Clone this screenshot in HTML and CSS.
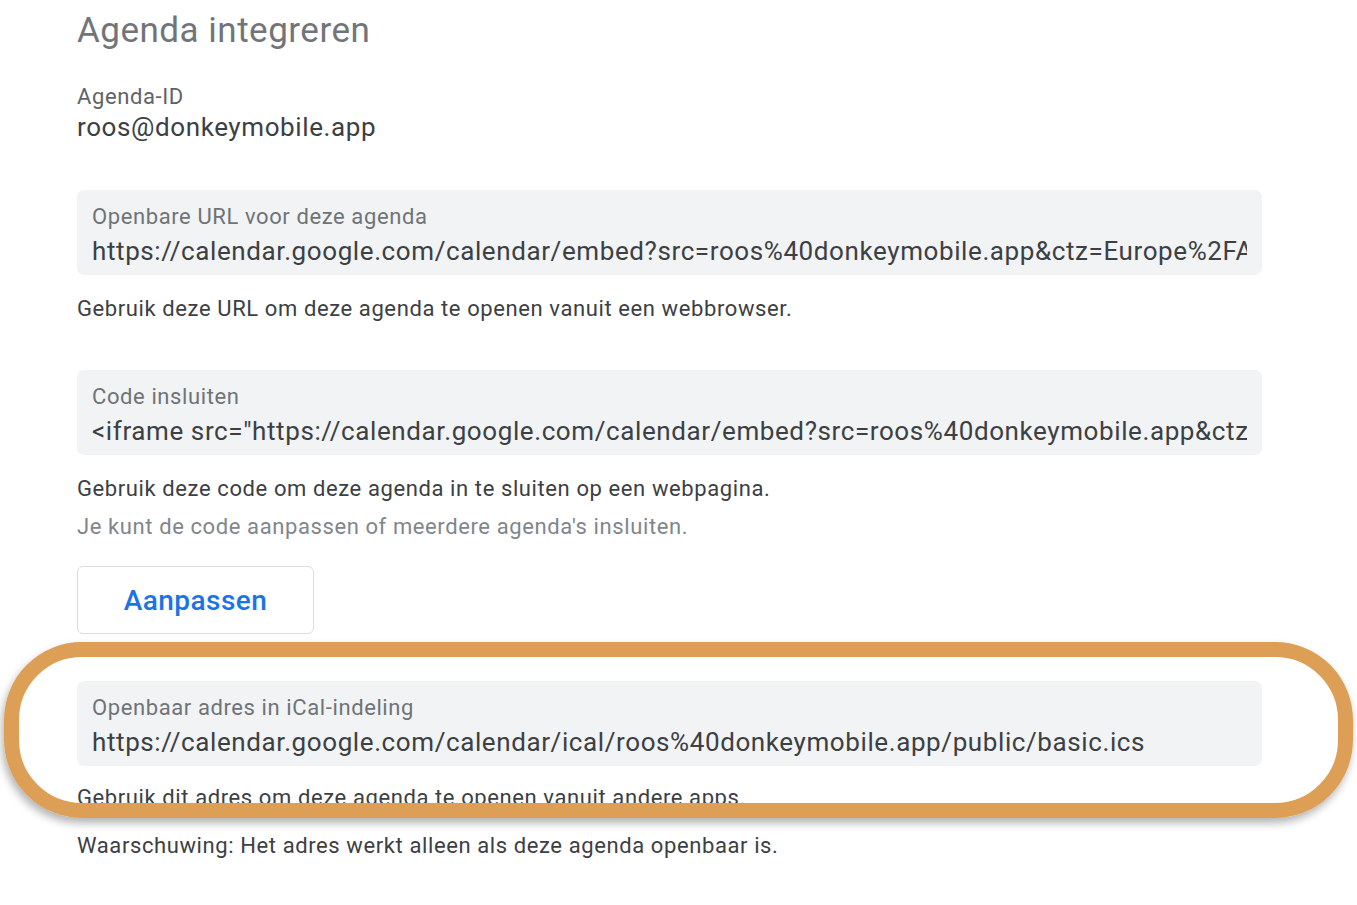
FILE: index.html
```html
<!DOCTYPE html>
<html lang="nl">
<head>
<meta charset="utf-8">
<title>Agenda integreren</title>
<link rel="stylesheet" href="styles.css">
</head>
<body>
<div class="page">
  <section class="panel">
    <h1 class="title">Agenda integreren</h1>
    <div class="id-label">Agenda-ID</div>
    <div class="id-value">roos@donkeymobile.app</div>

    <div class="field field-first">
      <div class="field-label">Openbare URL voor deze agenda</div>
      <div class="field-value">https://calendar.google.com/calendar/embed?src=roos%40donkeymobile.app&amp;ctz=Europe%2FAmsterdam</div>
    </div>
    <p class="help">Gebruik deze URL om deze agenda te openen vanuit een webbrowser.</p>

    <div class="field field-gap">
      <div class="field-label">Code insluiten</div>
      <div class="field-value">&lt;iframe src="https://calendar.google.com/calendar/embed?src=roos%40donkeymobile.app&amp;ctz=Europe%2FAmsterdam" style="border: 0" width="800" height="600" frameborder="0" scrolling="no"&gt;&lt;/iframe&gt;</div>
    </div>
    <p class="help">Gebruik deze code om deze agenda in te sluiten op een webpagina.</p>
    <p class="help help-muted">Je kunt de code aanpassen of meerdere agenda's insluiten.</p>
    <button class="btn" type="button">Aanpassen</button>

    <div class="field field-ical">
      <div class="field-label">Openbaar adres in iCal-indeling</div>
      <div class="field-value">https://calendar.google.com/calendar/ical/roos%40donkeymobile.app/public/basic.ics</div>
    </div>
    <p class="help help-ical">Gebruik dit adres om deze agenda te openen vanuit andere apps.</p>
    <p class="help help-warn">Waarschuwing: Het adres werkt alleen als deze agenda openbaar is.</p>
  </section>
  <div class="highlight" aria-hidden="true"></div>
</div>
</body>
</html>
```

FILE: styles.css
```css
html, body {
  margin: 0;
  padding: 0;
  background: #ffffff;
}

body {
  font-family: Roboto, "Liberation Sans", Arial, sans-serif;
  color: #3c4043;
}

.page {
  position: relative;
  width: 1357px;
  height: 905px;
  overflow: hidden;
}

.panel {
  display: flex;
  flex-direction: column;
  align-items: flex-start;
  padding: 11px 0 0 77px;
  width: 1185px;
}

.title {
  margin: 0;
  font-size: 35px;
  line-height: 40px;
  font-weight: 400;
  color: #717579;
  letter-spacing: 0.5px;
}

.id-label {
  margin-top: 31px;
  font-size: 22px;
  line-height: 30px;
  letter-spacing: 0.6px;
  color: #5f6368;
}

.id-value {
  font-size: 26px;
  line-height: 30px;
  letter-spacing: 0.6px;
  color: #3c4043;
}

.field {
  box-sizing: border-box;
  width: 1185px;
  height: 85px;
  padding: 12px 15px 9px 15px;
  background: #f1f3f4;
  border-radius: 7px;
}

.field-first {
  margin-top: 48px;
}

.field-gap {
  margin-top: 46px;
}

.field-ical {
  margin-top: 47px;
}

.field-label {
  font-size: 22px;
  line-height: 30px;
  letter-spacing: 0.6px;
  color: #6f7377;
}

.field-value {
  margin-top: 4px;
  font-size: 26px;
  line-height: 30px;
  letter-spacing: 0.6px;
  color: #3c4043;
  white-space: nowrap;
  overflow: hidden;
}

.help {
  margin: 19px 0 0 0;
  font-size: 22px;
  line-height: 30px;
  letter-spacing: 0.6px;
  color: #3c4043;
}

.help-muted {
  margin-top: 8px;
  color: #80868b;
}

.help-ical {
  margin-top: 17px;
}

.help-warn {
  margin-top: 18px;
}

.btn {
  margin-top: 24px;
  box-sizing: border-box;
  width: 237px;
  height: 68px;
  background: #ffffff;
  border: 1.5px solid #dadce0;
  border-radius: 6px;
  font-family: Roboto, "Liberation Sans", Arial, sans-serif;
  font-size: 28px;
  font-weight: 500;
  letter-spacing: 0.45px;
  color: #1a73e8;
  padding: 0;
  cursor: pointer;
}

.highlight {
  position: absolute;
  left: 4px;
  top: 642px;
  width: 1349px;
  height: 176px;
  box-sizing: border-box;
  border: 15px solid #dc9f55;
  border-radius: 78px;
  box-shadow: -2px 5px 8px rgba(0, 0, 0, 0.3);
  background: transparent;
}
```
